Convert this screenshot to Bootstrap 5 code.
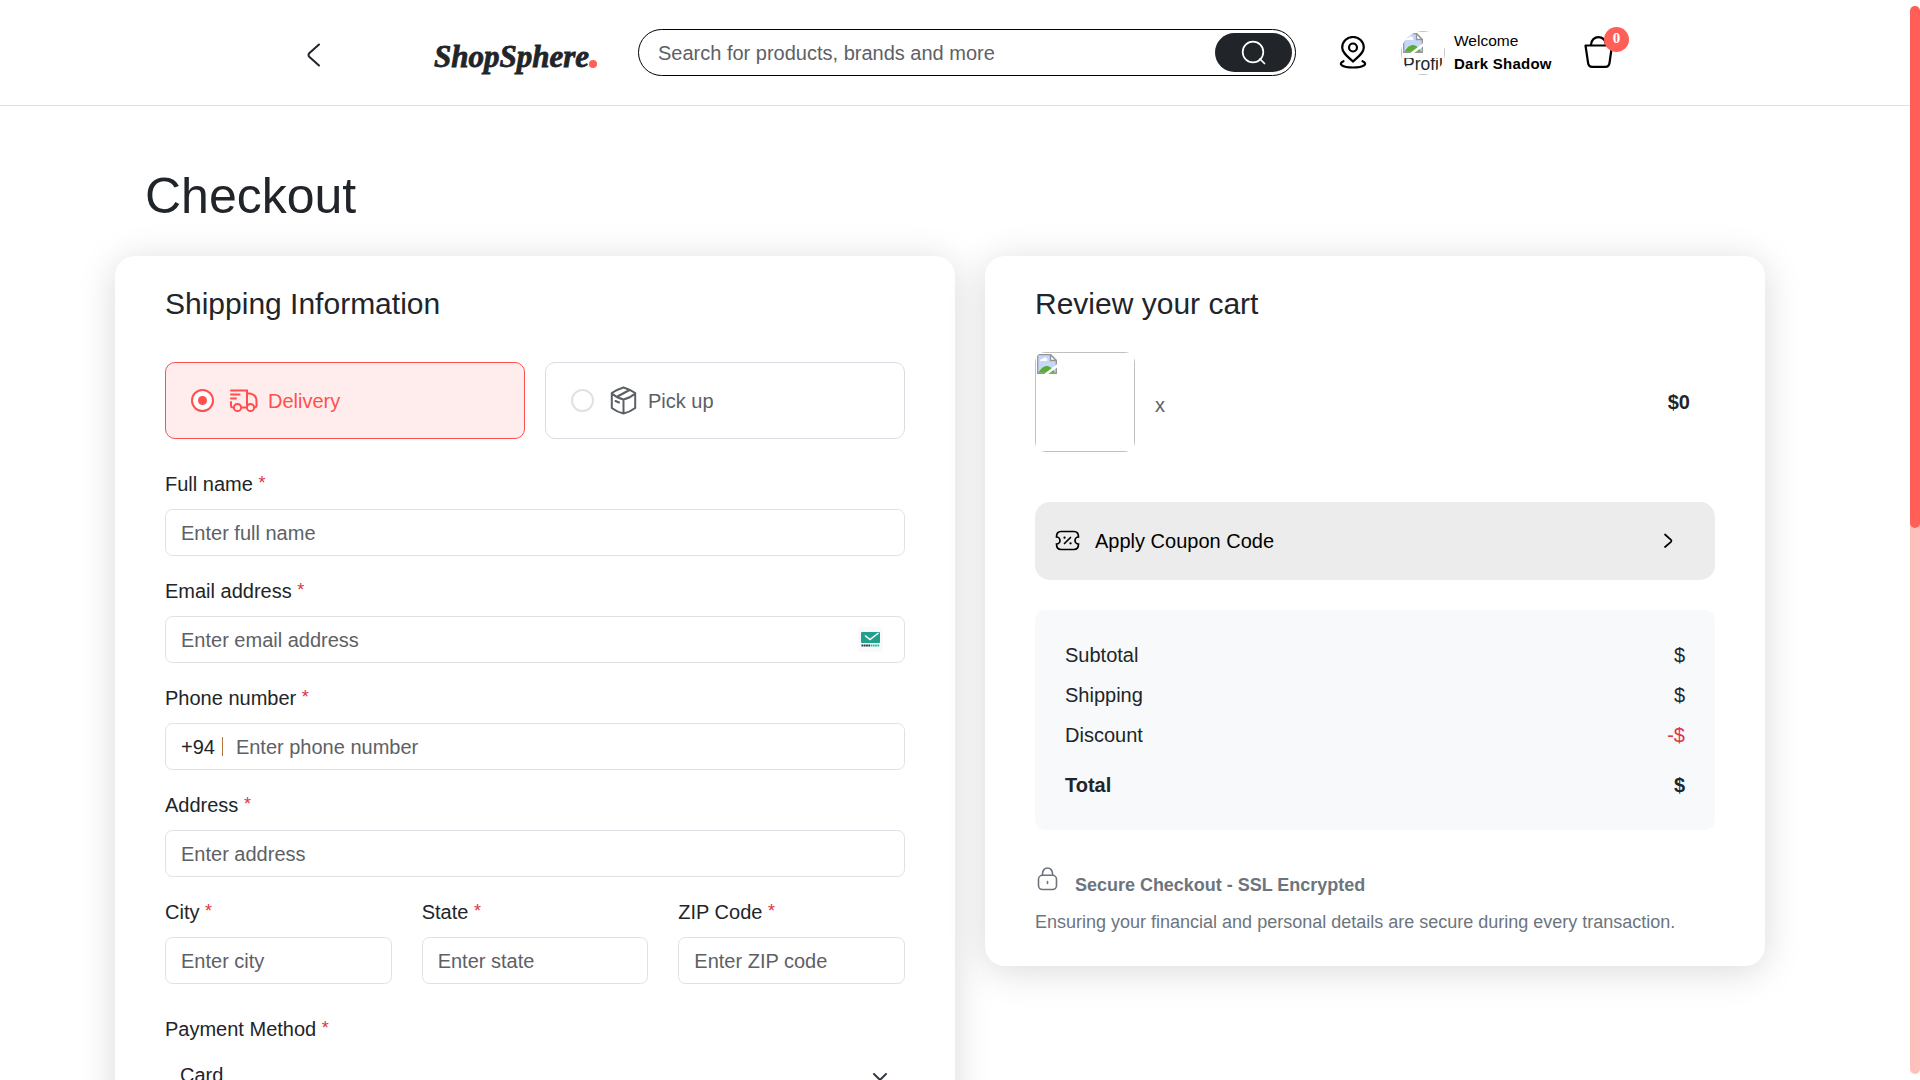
<!DOCTYPE html>
<html lang="en">
<head>
<meta charset="utf-8">
<meta name="viewport" content="width=device-width, initial-scale=1">
<title>ShopSphere - Checkout</title>
<link href="https://cdn.jsdelivr.net/npm/bootstrap@5.3.0/dist/css/bootstrap.min.css" rel="stylesheet">
<style>
  html { font-size: 20px; }
  body { font-family: "Liberation Sans", Arial, sans-serif; background: #fff; height: 1080px; overflow: hidden; color: #212529; }
  svg { display: block; flex: none; }
  .site-header { height: 106px; padding-left: 302px; border-bottom: 1px solid #dee2e6; }
  .header-row { height: 105px; }
  .brand { font-family: "Liberation Serif", serif; font-style: italic; font-weight: 700; font-size: 31px; line-height: 40px; width: 163px; margin: 8px 0 0 109px; white-space: nowrap; -webkit-text-stroke: .8px #212529; }
  .brand-dot { width: 8px; height: 8px; border-radius: 50%; background: #ff5f57; margin: 14px 0 0 0; }
  .search-box { width: 658px; height: 47px; border: 1px solid #000; border-radius: 24px; margin-left: 41px; padding: 0 3px 0 19px; }
  .search-box .form-control { border: 0; padding: 1px 0 0; background: none; }
  .search-btn { width: 77px; height: 39px; border-radius: 20px; background: #212529; border: 0; }
  .pin { margin: -1px 34px 0 43px; }
  .avatar { width: 44px; height: 44px; border-radius: 50%; overflow: hidden; margin-right: 9px; }
  .avatar-frame { height: 44px; border: 1px solid #c0c0c0; padding: 1px 2px 0 1px; }
  .avatar-alt { height: 16px; margin-top: 5px; overflow: hidden; line-height: 20px; font-size: 17.500px; }
  .avatar-alt span { display: block; margin-top: -4px; }
  .who { line-height: 23px; color: #000; width: 99px; margin: -2px 30px 0 0; font-size: 15.500px; }
  .who b { font-size: 15px; letter-spacing: .25px; white-space: nowrap; }
  .cart { margin-top: -2px; }
  .cart-count { left: 21px; top: -8px; width: 25px; height: 25px; border-radius: 50%; background: #ff5f57; color: #fff; font: 700 15px/22px "Liberation Serif", serif; text-align: center; }
  .page-body { width: 1650px; height: 974px; overflow: visible; margin-left: 115px; }
  .page-title { font-size: 50px; line-height: 60px; padding: 60px 0 0 30px; margin: 0; height: 150px; }
  .panel { background: #fff; border-radius: 20px; padding: 30px 50px 0; box-shadow: 0 5px 37.5px rgba(0,0,0,.15); }
  .panel h2 { font-size: 30px; line-height: 36px; margin: 0; }
  .panel-form { width: 840px; height: 900px; }
  .panel-cart { width: 780px; height: 710px; }
  .methods { gap: 20px; margin-top: 40px; }
  .method { height: 77px; border: 1px solid #d9dce2; border-radius: 10px; padding-left: 25px; color: #5c6066; flex: 1; }
  .method svg { margin: 0 10px 0 15px; }
  .method.is-picked { border-color: #ff4f4f; background: #ffeded; color: #ff4f4f; }
  .dot-ring { width: 23px; height: 23px; border: 2px solid #dee2e6; border-radius: 50%; background: #fff; }
  .is-picked .dot-ring { border-color: #ff4f4f; }
  .is-picked .dot-ring::after { content: ""; width: 9px; height: 9px; border-radius: 50%; background: #ff4f4f; }
  .form-control, .form-select { font-size: 20px; height: 47px; border-color: #dee2e6; padding-top: 8.5px; padding-bottom: 6.5px; }
  .form-control::placeholder { color: #5d6166; opacity: 1; }
  .form-label { display: block; line-height: 30px; margin-bottom: 10px; }
  .form-label span { color: #dc3545; font-size: 18px; line-height: 1; position: relative; top: -2px; }
  .gap-field { margin-top: 20px; }
  .gap-block { margin-top: 30px; }
  .form-select { border-color: transparent; background-color: transparent; background-size: 16px 16px; background-position: right 16px top 14px; padding-left: 14px; padding-top: 5px; padding-bottom: 10px; }
  .dial-code { border: 1px solid #dee2e6; border-radius: 7.500px; height: 47px; padding-left: 15px; }
  .dial-code .form-control { border: 0; height: 45px; padding: 2px 0 0 10px; }
  .dial-bar { width: 1px; height: 19px; background: #b5763a; margin-left: 7px; margin-right: 3px; }
  .mail-tool { right: 22px; top: 11px; }
  .cart-line { padding-right: 25px; }
  .thumb-clip { width: 100px; height: 100px; border-radius: 10px; overflow: hidden; }
  .thumb-frame { height: 100px; border: 1px solid #c0c0c0; padding: 1px; }
  .qty { color: #5c6066; padding-top: 6px; margin-left: 20px; }
  .coupon { height: 78px; border-radius: 15px; background: #ececec; color: #000; padding: 0 37px 0 20px; margin-top: 50px; }
  .coupon-text { margin-left: 15px; }
  .totals { height: 220px; background: #f8f9fb; border-radius: 10px; padding: 30px; margin-top: 30px; }
  .total-line { margin-top: 20px; }
  .secure-note { color: #6c757d; font-size: 18px; line-height: 26px; margin-top: 35px; }
  .secure-note b { margin: 7px 0 0 15px; letter-spacing: -.02px; }
  .secure-text { margin-top: 11px; white-space: nowrap; }
  .scroll-rail { position: fixed; right: 0; top: 6px; width: 10px; height: 1068px; border-radius: 5px; background: #ffbfbb; }
  .scroll-grip { height: 522px; border-radius: 5px; background: #ff5f57; }
</style>
<script src="https://cdn.jsdelivr.net/npm/bootstrap@5.3.0/dist/js/bootstrap.bundle.min.js"></script>
</head>
<body>
<svg width="0" height="0" class="position-absolute">
  <symbol id="broken" viewBox="0 0 20 20">
    <path d="M.7 .7H13.500L19.300 6.500V19.300H.7Z" fill="#c6d8f8" stroke="#949494" stroke-width="1.300"/>
    <path d="M3 7a2 2 0 0 1 2.500-2 2.400 2.400 0 0 1 4.500 2Z" fill="#fff"/>
    <path d="M1.500 18.700C4 14 7 12 10 12s6 3 8 6.700Z" fill="#5aac35"/>
    <path d="M13.500 .7V6.500H19.300Z" fill="#fff" stroke="#949494" stroke-width="1.300"/>
    <path d="M8.500 20.500 21 11" stroke="#fff" stroke-width="2.600"/>
  </symbol>
</svg>
<header class="site-header">
  <div class="header-row d-flex align-items-center">
    <svg width="23" height="30" viewBox="0 0 23 30" fill="none" stroke="#212529" stroke-width="2" stroke-linecap="round" class="mt-1"><path d="M17 4.500 7.500 13Q5.500 15 7.500 17L17 25.500"/></svg>
    <div class="brand d-flex align-items-center"><span>ShopSphere</span><span class="brand-dot"></span></div>
    <div class="search-box d-flex align-items-center">
      <input class="form-control shadow-none" placeholder="Search for products, brands and more">
      <button class="search-btn d-flex align-items-center justify-content-center flex-shrink-0" aria-label="Search"><svg width="25" height="25" viewBox="0 0 25 25" fill="none" stroke="#fff" stroke-width="1.700"><circle cx="12" cy="12" r="10.300"/><path d="m19 19 4.500 4.500" stroke-linecap="round"/></svg></button>
    </div>
    <svg class="pin" width="28" height="33" viewBox="0 0 28 33" fill="none" stroke="#000" stroke-width="2.200" stroke-linecap="round"><path d="M14 25.500C9 21 3.200 17 3.200 11.500a10.800 10.500 0 0 1 21.600 0C24.800 17 19 21 14 25.500Z"/><circle cx="14" cy="11.500" r="4"/><path d="M4.500 25.200C-1.500 28 3 31.500 14 31.500s15.500-3.500 9.500-6.300"/></svg>
    <div class="avatar"><div class="avatar-frame"><svg width="20" height="20"><use href="#broken"/></svg><div class="avatar-alt"><span>Profil</span></div></div></div>
    <div class="who"><div>Welcome</div><b>Dark Shadow</b></div>
    <div class="cart position-relative"><svg width="32" height="34" viewBox="0 0 32 34" fill="none" stroke="#000" stroke-width="2.200"><path d="M2.500 10.500H29L26.500 28q-.6 3.800-4 3.800H9.200q-3.600 0-4.100-3.800Z" stroke-linejoin="round"/><path d="M8 10c0-10.500 15-10.500 15 0"/></svg><span class="cart-count position-absolute">0</span></div>
  </div>
</header>
<main class="page-body">
  <h1 class="page-title">Checkout</h1>
  <div class="d-flex justify-content-between align-items-start">
    <section class="panel panel-form">
      <h2>Shipping Information</h2>
      <div class="methods d-flex">
        <div class="method is-picked d-flex align-items-center">
          <span class="dot-ring d-flex align-items-center justify-content-center"></span>
          <svg width="29" height="24" viewBox="0 0 29 24" fill="none" stroke="currentColor" stroke-width="2" stroke-linecap="round"><path d="M2 1.500H18V18.500M2 5.500H10.500M2 9.500H7M2 13V17Q2 18.500 4.500 18.500M12.500 18.500H18M18 4.500H21Q27.500 5.500 27.500 12.500V16.500Q27.500 18.500 25 18.500"/><circle cx="8.500" cy="18.500" r="3.600"/><circle cx="21.500" cy="18.500" r="3.600"/></svg>
          <span>Delivery</span>
        </div>
        <div class="method d-flex align-items-center">
          <span class="dot-ring"></span>
          <svg width="29" height="30" viewBox="0 0 29 30" fill="none" stroke="currentColor" stroke-width="2" stroke-linejoin="round" stroke-linecap="round"><path d="M2.800 7Q8 3.500 14.500 1.500Q21 3.500 26.200 7V22Q21 26 14.500 27.500Q8 26 2.800 22ZM2.800 7.500Q8 12 14.500 13.500Q21 12 26.200 7.500M14.500 13.500V27.500M8.500 10.500 20.500 4M6.500 15l3.500 1.500"/></svg>
          <span>Pick up</span>
        </div>
      </div>
      <div class="gap-block"><label class="form-label">Full name <span>*</span></label><input class="form-control" placeholder="Enter full name"></div>
      <div class="gap-field"><label class="form-label">Email address <span>*</span></label>
        <div class="position-relative"><input class="form-control" placeholder="Enter email address">
          <svg class="mail-tool position-absolute" width="25" height="25" viewBox="0 0 25 25"><rect width="25" height="25" rx="2" fill="#f8f9fa"/><rect x="3" y="5" width="19" height="11" rx="1" fill="#22a08b"/><path d="M7 8.500 12 12.500 20.500 6" fill="none" stroke="#fff" stroke-width="1.500"/><path d="M3.500 18.500H12" stroke="#25364a" stroke-width="2.200" stroke-dasharray="1.800 .5"/><path d="M12.500 18.500H21.500" stroke="#2bb79d" stroke-width="2.200" stroke-dasharray="1.800 .5"/></svg></div></div>
      <div class="gap-field"><label class="form-label">Phone number <span>*</span></label>
        <div class="dial-code d-flex align-items-center"><span>+94</span><span class="dial-bar"></span><input class="form-control shadow-none" placeholder="Enter phone number"></div></div>
      <div class="gap-field"><label class="form-label">Address <span>*</span></label><input class="form-control" placeholder="Enter address"></div>
      <div class="row gap-field-row">
        <div class="col-4 gap-field"><label class="form-label">City <span>*</span></label><input class="form-control" placeholder="Enter city"></div>
        <div class="col-4 gap-field"><label class="form-label">State <span>*</span></label><input class="form-control" placeholder="Enter state"></div>
        <div class="col-4 gap-field"><label class="form-label">ZIP Code <span>*</span></label><input class="form-control" placeholder="Enter ZIP code"></div>
      </div>
      <div class="gap-block"><label class="form-label">Payment Method <span>*</span></label><select class="form-select"><option>Card</option></select></div>
    </section>
    <section class="panel panel-cart">
      <h2>Review your cart</h2>
      <div class="cart-line gap-block d-flex align-items-center">
        <div class="thumb-clip"><div class="thumb-frame"><svg width="20" height="20"><use href="#broken"/></svg></div></div>
        <span class="qty">x</span>
        <b class="ms-auto">$0</b>
      </div>
      <div class="coupon d-flex align-items-center">
        <svg width="25" height="22" viewBox="0 0 25 22" fill="none" stroke="#000" stroke-width="1.700" stroke-linecap="round"><path d="M6 1.500H19Q23.500 1.500 23.500 7A3.500 3.500 0 0 0 23.500 14Q23.500 19.500 19 19.500H6Q1.500 19.500 1.500 14A3.500 3.500 0 0 0 1.500 7Q1.500 1.500 6 1.500ZM9.500 13.500 15.500 7.500"/><path d="M9.500 7.700h.1M15.500 13.300h.1" stroke-width="2.200"/></svg>
        <span class="coupon-text">Apply Coupon Code</span>
        <svg class="ms-auto" width="20" height="20" viewBox="0 0 20 20" fill="none" stroke="#000" stroke-width="1.700" stroke-linecap="round"><path d="M7 3.500 13 8.800Q14 9.800 13 10.800L7 16"/></svg>
      </div>
      <div class="totals">
        <div class="d-flex justify-content-between mb-2"><span>Subtotal</span><span>$</span></div>
        <div class="d-flex justify-content-between mb-2"><span>Shipping</span><span>$</span></div>
        <div class="d-flex justify-content-between mb-2"><span>Discount</span><span class="text-danger">-$</span></div>
        <div class="total-line d-flex justify-content-between fw-bold"><span>Total</span><span>$</span></div>
      </div>
      <div class="secure-note">
        <div class="d-flex"><svg width="25" height="28" viewBox="0 0 25 28" fill="none" stroke="currentColor" stroke-width="1.600" stroke-linecap="round"><rect x="3.500" y="10.300" width="18" height="14.200" rx="4"/><path d="M7.500 10V8.500a5 5.500 0 0 1 10 0V10M12.500 16.500v2"/></svg><b>Secure Checkout - SSL Encrypted</b></div>
        <div class="secure-text">Ensuring your financial and personal details are secure during every transaction.</div>
      </div>
    </section>
  </div>
</main>
<div class="scroll-rail"><div class="scroll-grip"></div></div>
</body>
</html>
